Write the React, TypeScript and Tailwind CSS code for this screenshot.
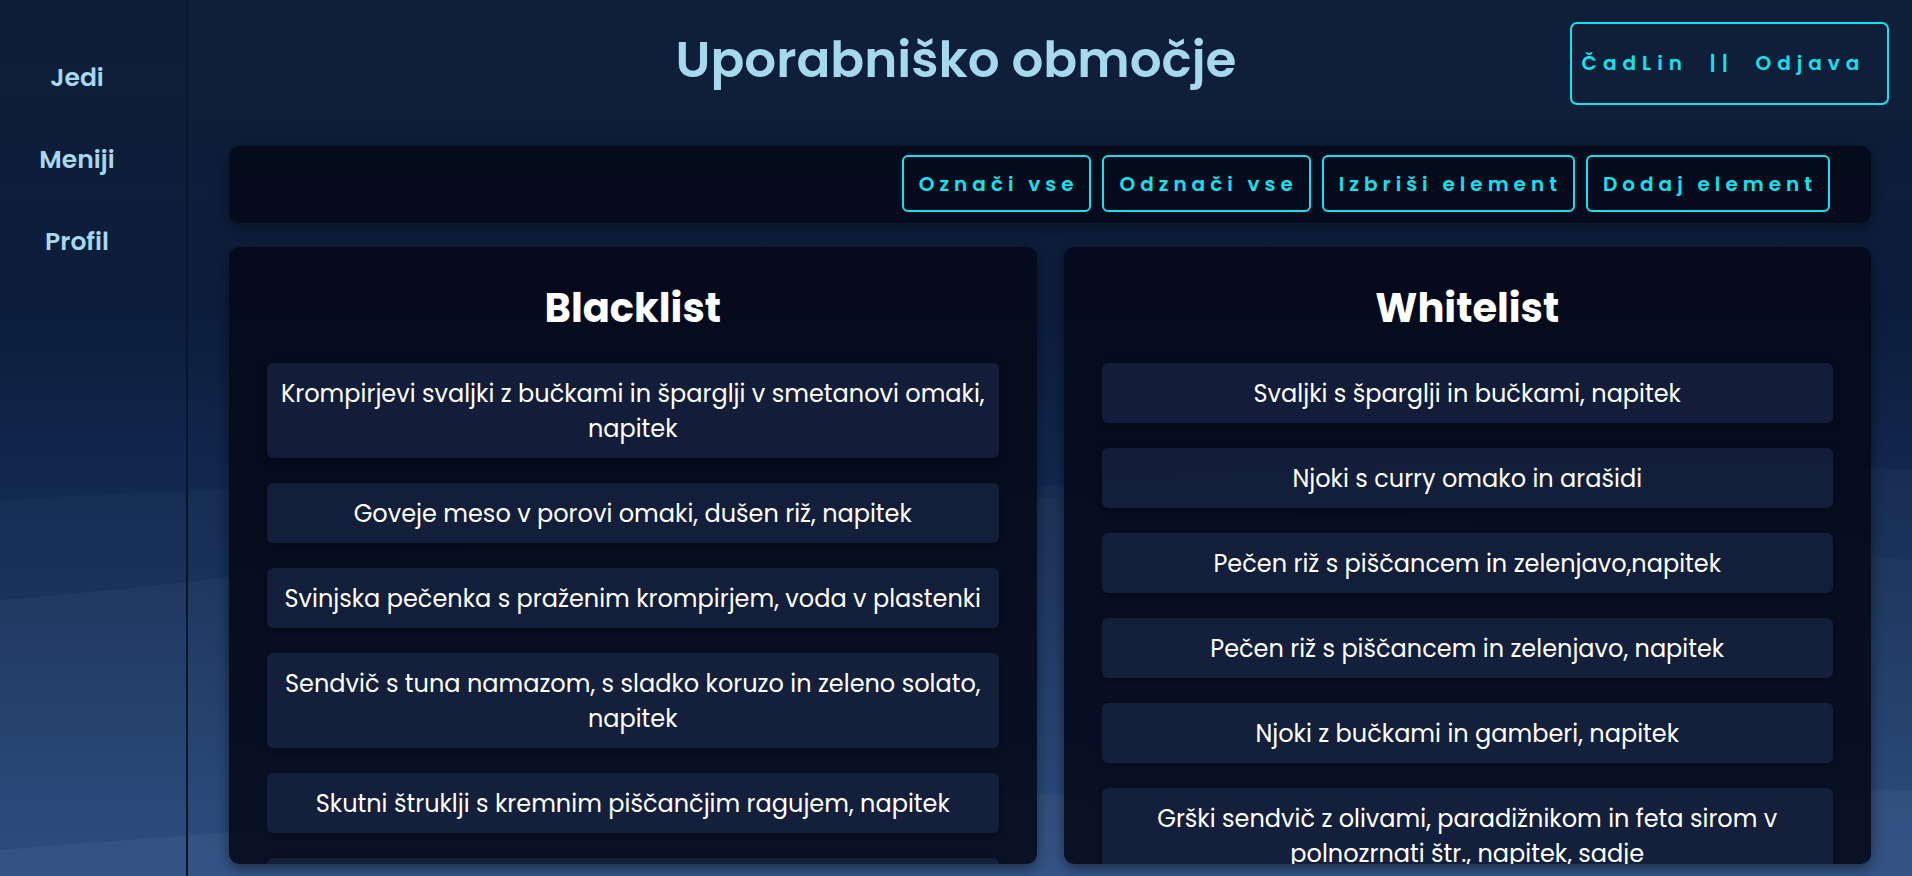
import React from "react";

const blacklist = [
  "Krompirjevi svaljki z bučkami in šparglji v smetanovi omaki, napitek",
  "Goveje meso v porovi omaki, dušen riž, napitek",
  "Svinjska pečenka s praženim krompirjem, voda v plastenki",
  "Sendvič s tuna namazom, s sladko koruzo in zeleno solato, napitek",
  "Skutni štruklji s kremnim piščančjim ragujem, napitek",
  "Testenine s paradižnikovo omako in sirom, napitek",
];

const whitelist = [
  "Svaljki s šparglji in bučkami, napitek",
  "Njoki s curry omako in arašidi",
  "Pečen riž s piščancem in zelenjavo,napitek",
  "Pečen riž s piščancem in zelenjavo, napitek",
  "Njoki z bučkami in gamberi, napitek",
  "Grški sendvič z olivami, paradižnikom in feta sirom v polnozrnati štr., napitek, sadje",
];

function Panel({ title, items }: { title: string; items: string[] }) {
  return (
    <div className="flex-1 h-[617px] overflow-hidden rounded-[10px] bg-[#040a19]/90 shadow-[0_4px_14px_rgba(0,0,0,0.45)] px-[38px] pt-[37px]">
      <h2 className="text-center text-white text-[40px] leading-[48px] font-bold">{title}</h2>
      <div className="mt-[31px] flex flex-col gap-[25px]">
        {items.map((t) => (
          <div
            key={t}
            className="rounded-[6px] bg-[#1c2a4c]/60 shadow-[0_2px_6px_rgba(0,0,0,0.35)] px-[12px] py-[12.5px] text-center text-white text-[24px] leading-[35px]"
          >
            {t}
          </div>
        ))}
      </div>
    </div>
  );
}

function ToolButton({ label }: { label: string }) {
  return (
    <button className="h-[57px] rounded-[6px] border-2 border-[#0fe3f0] pl-[15px] pr-[11px] text-[20px] font-semibold tracking-[0.25em] text-[#0fe3f0]">
      {label}
    </button>
  );
}

export default function App() {
  return (
    <div className="relative h-[876px] w-full overflow-hidden bg-[linear-gradient(180deg,#0f1e37_0%,#0c1d3c_35%,#15305c_70%,#21457a_100%)] font-['Poppins','Inter','Noto_Sans',sans-serif]">
      <svg className="pointer-events-none absolute inset-0 h-full w-full" viewBox="0 0 1912 876" preserveAspectRatio="none">
        <path d="M0 600 C 500 560, 1100 430, 1912 470 L1912 876 L0 876 Z" fill="#ffffff" fillOpacity="0.03" />
        <path d="M0 500 C 500 470, 1000 480, 1912 560 L1912 876 L0 876 Z" fill="#ffffff" fillOpacity="0.025" />
        <path d="M0 850 C 600 800, 1300 780, 1912 790 L1912 876 L0 876 Z" fill="#ffffff" fillOpacity="0.04" />
      </svg>
      <div className="relative flex h-full">
        <aside className="w-[188px] shrink-0 border-r-2 border-[#0a1529] flex flex-col items-center pr-[32px] pt-[60px] gap-[47px]">
          {["Jedi", "Meniji", "Profil"].map((l) => (
            <a key={l} className="text-[25px] leading-[35px] font-semibold text-[#a6d8ee]">
              {l}
            </a>
          ))}
        </aside>
        <main className="flex-1 flex flex-col">
          <header className="h-[120px] shrink-0 bg-[#0f1f39] flex items-center pr-[23px]">
            <div className="flex-1 pl-[154px] text-center">
              <h1 className="text-[50px] leading-[60px] font-semibold text-[#a6d8ee]">Uporabniško območje</h1>
            </div>
            <button className="mt-[6px] h-[83px] w-[319px] rounded-[7px] border-2 border-[#0fe3f0] pr-[12px] text-[20px] font-semibold tracking-[0.3em] text-[#0fe3f0]">
              ČadLin &nbsp;|| &nbsp;Odjava
            </button>
          </header>
          <div className="px-[41px] pt-[26px] flex flex-col gap-[24px]">
            <div className="h-[77px] rounded-[10px] bg-[#040a19]/90 shadow-[0_4px_14px_rgba(0,0,0,0.45)] flex items-center justify-end gap-[11px] pr-[41px] pb-[2px]">
              <ToolButton label="Označi vse" />
              <ToolButton label="Odznači vse" />
              <ToolButton label="Izbriši element" />
              <ToolButton label="Dodaj element" />
            </div>
            <div className="flex gap-[27px]">
              <Panel title="Blacklist" items={blacklist} />
              <Panel title="Whitelist" items={whitelist} />
            </div>
          </div>
        </main>
      </div>
    </div>
  );
}
